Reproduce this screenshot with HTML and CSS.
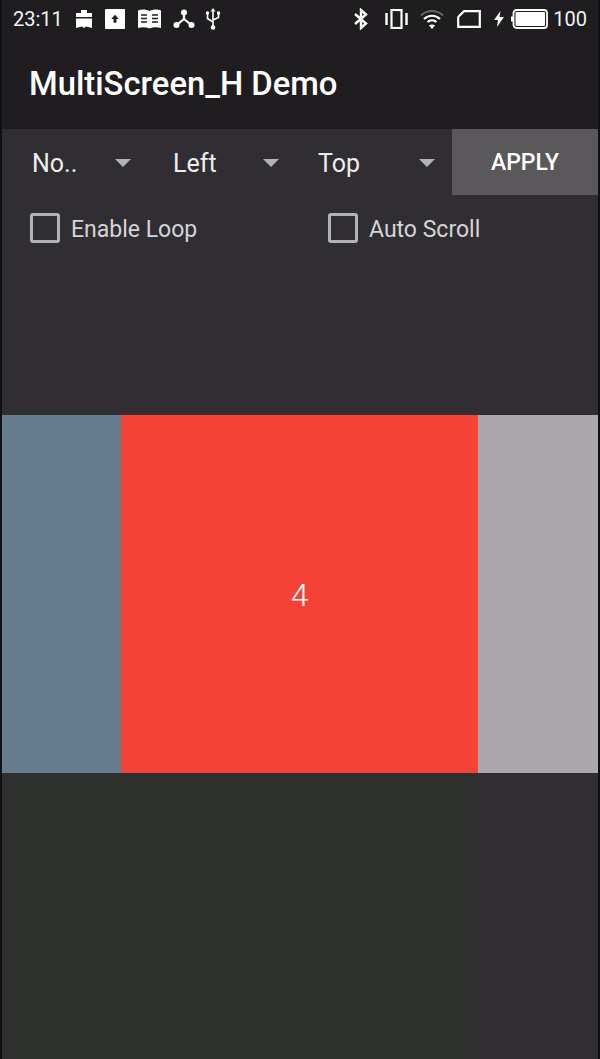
FILE: index.html
```html
<!DOCTYPE html>
<html lang='en'>
<head>
    <meta charset='UTF-8'>
    <title>MultiScreen_H Demo</title>
    <link rel="stylesheet" href="styles.css">
</head>
<body>
    <div class="screen">
        <div class="appbar">
            <div class="statusbar">
                <span class="time">23:11</span>
                <svg class="icon icon_cal" viewBox="0 0 18 18"><path d="M6 0h6v3h5v4H1V3h5z" fill="#fff"/><path d="M1 8.500h16V18l-6-1.500-2 1.500-2-1.500L1 18z" fill="#fff"/></svg>
                <svg class="icon icon_up" viewBox="0 0 21 21"><rect width="21" height="21" rx="1" fill="#fff"/><path d="M10.500 6l4 4.500h-2.500v4h-3v-4H6.500z" fill="#1f1d20"/></svg>
                <svg class="icon icon_book" viewBox="0 0 23 20"><path d="M0 1.500C4 0 8 .5 11.500 2 15 .5 19 0 23 1.500V19c-4-1-8-1-11.500.5C8 18 4 18 0 19z" fill="#fff"/><path d="M3 6h6M3 9.500h6M3 13h6M14 6h6M14 9.500h6M14 13h6" stroke="#1f1d20" stroke-width="1.500"/></svg>
                <svg class="icon icon_share" viewBox="0 0 22 20"><path d="M11 4v6L3.500 16M11 10l7.500 6" stroke="#fff" stroke-width="2.200" fill="none"/><circle cx="11" cy="3.500" r="3" fill="#fff"/><circle cx="3.500" cy="16" r="3" fill="#fff"/><circle cx="18.500" cy="16" r="3" fill="#fff"/></svg>
                <svg class="icon icon_usb" viewBox="0 0 16 22"><path d="M8 3v16M2.500 6v4.500L8 14M13.500 6v3.500L8 12" stroke="#fff" stroke-width="1.600" fill="none"/><path d="M8 0l2.500 3.500h-5z" fill="#fff"/><circle cx="8" cy="19.500" r="2.300" fill="#fff"/><circle cx="2.500" cy="5" r="1.700" fill="#fff"/><rect x="12" y="3.500" width="3" height="3" fill="#fff"/></svg>
                <span class="status_gap"></span>
                <svg class="icon icon_bt" viewBox="0 0 16 22"><path d="M2 6l11 9.500L8 20V2l5 4.500L2 16" stroke="#fff" stroke-width="2.400" fill="none"/></svg>
                <svg class="icon icon_vibrate" viewBox="0 0 23 20"><rect x="6.500" y="1" width="10" height="18" fill="none" stroke="#fff" stroke-width="2.200"/><path d="M1.500 4v12M21.500 4v12" stroke="#fff" stroke-width="2.400"/></svg>
                <svg class="icon icon_wifi" viewBox="0 0 24 20"><path d="M1 6.500C7 .5 17 .5 23 6.500" stroke="#666" stroke-width="2" fill="none"/><path d="M4 10c4.500-4.500 11.500-4.500 16 0" stroke="#fff" stroke-width="2" fill="none"/><path d="M7.500 13c2.500-2.500 6.500-2.500 9 0" stroke="#fff" stroke-width="2" fill="none"/><path d="M12 20l-3-3.500c1.800-1.200 4.200-1.200 6 0z" fill="#fff"/></svg>
                <svg class="icon icon_sim" viewBox="0 0 24 18"><path d="M1.200 7L7 1.200h15.800v15.600H1.200z" fill="none" stroke="#fff" stroke-width="2.200"/></svg>
                <svg class="icon icon_bolt" viewBox="0 0 10 16"><path d="M6.500 0L0 9h4l-1 7 7-10H5.500z" fill="#fff"/></svg>
                <svg class="icon icon_battery" viewBox="0 0 37 20"><rect x="2.500" y="1" width="33.500" height="18" rx="3" fill="none" stroke="#fff" stroke-width="1.800"/><rect x="4.500" y="3" width="29.500" height="14" rx="1" fill="#fff"/><rect x="0" y="7.500" width="2" height="5" fill="#fff"/></svg>
                <span class="level">100</span>
            </div>
            <div class="title">MultiScreen_H Demo</div>
        </div>

        <div class="options">
            <div class="spinner spinner_first"><span>No..</span><i class="arrow"></i></div>
            <div class="spinner spinner_second"><span>Left</span><i class="arrow"></i></div>
            <div class="spinner spinner_third"><span>Top</span><i class="arrow"></i></div>
            <button class="apply">APPLY</button>
        </div>

        <div class="checks">
            <label class="check check_loop"><i class="box"></i><span class="check_text">Enable Loop</span></label>
            <label class="check"><i class="box"></i><span class="check_text">Auto Scroll</span></label>
        </div>

        <div class="pager">
            <div class="page page_prev"></div>
            <div class="page page_current">4</div>
            <div class="page page_next"></div>
        </div>

        <div class="bottom">
            <div class="bottom_left"></div>
        </div>
    </div>
</body>
</html>
```

FILE: styles.css
```css
html, body
{
    margin: 0;
    height: 100%;
    background: #111012;
}
body
{
    font-family: 'Roboto', 'Liberation Sans', sans-serif;
    overflow: hidden;
}
.screen
{
    display: flex;
    flex-direction: column;
    height: 1059px;
    margin: 0 2px;
    background: #302e32;
}
.appbar
{
    height: 129px;
    background: #1f1d20;
    color: #fff;
}
.statusbar
{
    display: flex;
    align-items: center;
    height: 37px;
    padding: 0 11px;
    font-size: 20px;
    color: #f2f2f2;
}
.status_gap
{
    flex: 1;
}
.icon
{
    display: block;
    flex: none;
}
.icon_cal { width: 18px; height: 18px; margin-left: 12px; }
.icon_up { width: 20px; height: 20px; margin-left: 12px; }
.icon_book { width: 23px; height: 20px; margin-left: 13px; }
.icon_share { width: 22px; height: 20px; margin-left: 12px; }
.icon_usb { width: 16px; height: 22px; margin-left: 10px; }
.icon_bt { width: 16px; height: 22px; }
.icon_vibrate { width: 23px; height: 20px; margin-left: 16px; }
.icon_wifi { width: 24px; height: 20px; margin-left: 12px; }
.icon_sim { width: 24px; height: 18px; margin-left: 13px; }
.icon_bolt { width: 10px; height: 16px; margin-left: 13px; }
.icon_battery { width: 37px; height: 20px; margin-left: 7px; }
.level
{
    margin-left: 5px;
}
.title
{
    margin-top: 25px;
    padding-left: 27px;
    font-size: 32.800px;
    font-weight: 500;
    line-height: 44px;
}
.options
{
    display: flex;
    align-items: center;
    height: 66px;
    color: #eeeeee;
    font-size: 25px;
}
.spinner
{
    display: flex;
    align-items: center;
    justify-content: space-between;
    height: 100%;
    box-sizing: border-box;
    padding-top: 2px;
    padding-left: 30px;
}
.spinner_first { width: 129px; }
.spinner_second { width: 148px; padding-left: 42px; }
.spinner_third { width: 173px; padding-left: 39px; padding-right: 17px; }
.arrow
{
    width: 0;
    height: 0;
    border-left: 8px solid transparent;
    border-right: 8px solid transparent;
    border-top: 8px solid #b3b2b4;
}
.apply
{
    flex: 1;
    height: 100%;
    padding: 0;
    border: 0;
    background: #5a585b;
    color: #fff;
    font-family: inherit;
    font-size: 23px;
    font-weight: 500;
}
.checks
{
    display: flex;
    align-items: center;
    height: 66px;
    padding-left: 28px;
    color: #d6d5d6;
    font-size: 23px;
}
.check
{
    display: flex;
    align-items: center;
}
.check_loop
{
    width: 298px;
}
.check_text
{
    padding-top: 2px;
}
.box
{
    width: 24px;
    height: 24px;
    margin-right: 11px;
    border: 3px solid #b3b2b4;
    border-radius: 3px;
}
.pager
{
    display: flex;
    height: 358px;
    margin-top: 154px;
}
.page
{
    display: flex;
    align-items: center;
    justify-content: center;
}
.page_prev { width: 119px; background: #667c8f; }
.page_current { width: 357px; padding-top: 2px; box-sizing: border-box; background: #f44336; color: #fff; font-size: 32px; font-weight: 300; }
.page_next { flex: 1; background: #aaa8ab; }
.bottom
{
    flex: 1;
}
.bottom_left
{
    width: 476px;
    height: 100%;
    background: #2e302d;
}
```
